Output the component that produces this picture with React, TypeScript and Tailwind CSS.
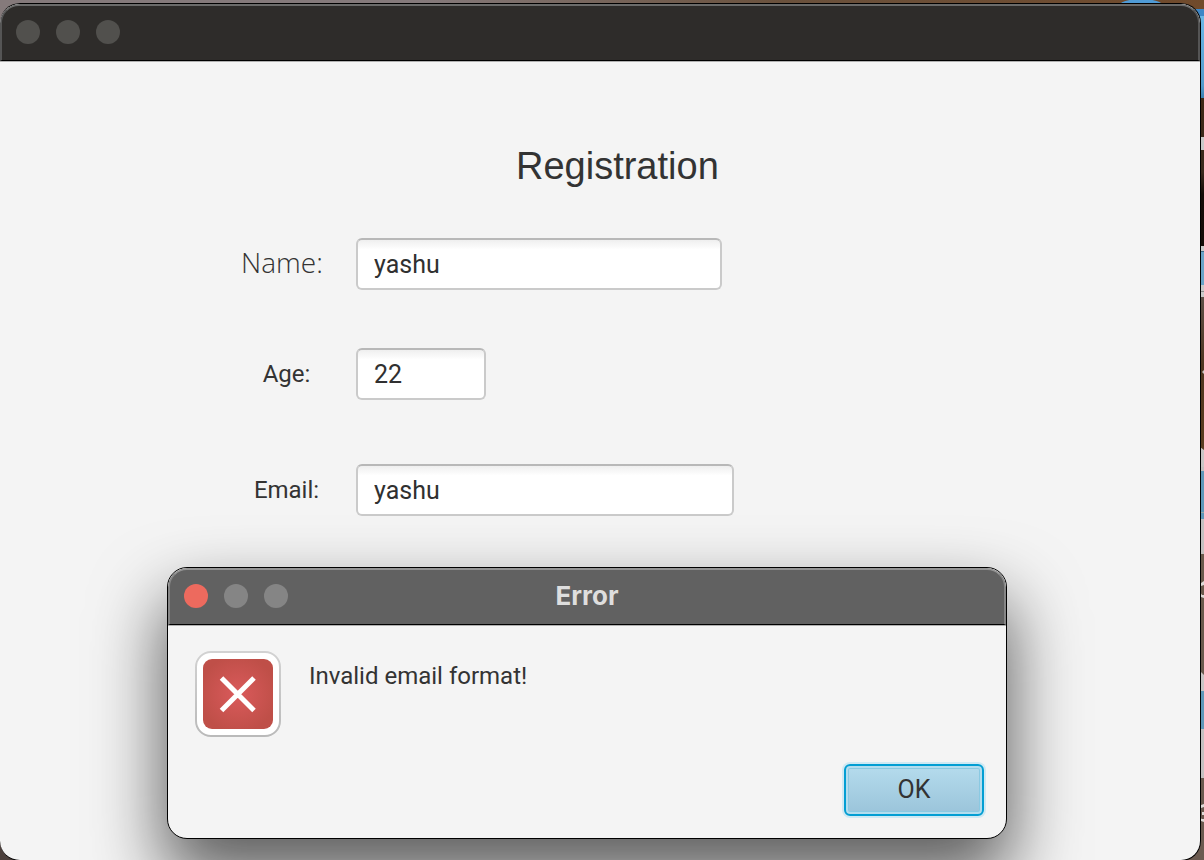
import { ReactNode } from "react";

function WindowDots({ first, rest }: { first: string; rest: string }) {
  return (
    <div className="flex gap-4">
      <button type="button" aria-label="Close" className={`size-6 rounded-full ${first}`} />
      <button type="button" aria-label="Minimize" className={`size-6 rounded-full ${rest}`} />
      <button type="button" aria-label="Zoom" className={`size-6 rounded-full ${rest}`} />
    </div>
  );
}

function Wallpaper() {
  return (
    <>
      <div className="absolute inset-x-0 top-0 h-10 bg-linear-to-r from-[#857a7b] from-35% via-[#6a513c] via-65% to-[#704a2b]" />
      <svg className="absolute top-0 right-0 h-[860px] w-[84px]" viewBox="0 0 84 860" aria-hidden="true">
        <defs>
          <linearGradient id="folder" x1="0" y1="0" x2="0" y2="1">
            <stop offset="0" stopColor="#6bb8e6" />
            <stop offset="0.85" stopColor="#539bcb" />
            <stop offset="1" stopColor="#3b7fb0" />
          </linearGradient>
          <linearGradient id="rock" x1="0" y1="0" x2="0" y2="1">
            <stop offset="0" stopColor="#3f2916" />
            <stop offset="0.5" stopColor="#3a2a1e" />
            <stop offset="0.65" stopColor="#140b07" />
            <stop offset="1" stopColor="#150c08" />
          </linearGradient>
          <linearGradient id="sand" x1="0" y1="0" x2="0" y2="1">
            <stop offset="0" stopColor="#5f5048" />
            <stop offset="0.12" stopColor="#4f3620" />
            <stop offset="0.25" stopColor="#5a3c1f" />
            <stop offset="0.45" stopColor="#6b5a4c" />
            <stop offset="1" stopColor="#6b5a50" />
          </linearGradient>
        </defs>
        <ellipse cx="21" cy="6" rx="22" ry="7" fill="#4f9bd6" />
        <rect x="72" y="9" width="12" height="7" fill="#3d86c6" />
        <rect x="72" y="16" width="12" height="82" fill="url(#folder)" />
        <rect x="80" y="98" width="4" height="148" fill="url(#rock)" />
        <rect x="80" y="137" width="4" height="13" fill="#c9c9c9" />
        <rect x="80" y="246" width="4" height="51" fill="#cacaca" />
        <rect x="80" y="251" width="4" height="34" fill="#69a4c8" />
        <rect x="80" y="251" width="4" height="1" fill="#3c6a86" />
        <rect x="80" y="291" width="4" height="1" fill="#8b8b8b" />
        <rect x="80" y="297" width="4" height="563" fill="url(#sand)" />
        <path d="M60 840h24v20H60z" fill="#6b5a50" />
        <path d="M84 370l-2 2 2 2zM80 447l4 3v18h-4z" fill="#c9c5c5" />
        <rect x="80" y="467" width="4" height="87" fill="#c4c0c0" />
        <rect x="80" y="471" width="4" height="48" fill="#5f98b9" />
        <rect x="80" y="512" width="4" height="1" fill="#99aaaa" />
        <path d="M81 583l3-2v4l-3 1zM80 592l2 3h2v3l-3-1zM81 805l3-1v3l-3 1zM82 812h2v3h-2zM80 818l2 1h2v3l-3-1z" fill="#dedad8" />
        <path d="M80 671l4 4v17h-4z" fill="#c9c5c5" />
        <rect x="80" y="691" width="4" height="38" fill="#5f98b9" />
        <rect x="80" y="729" width="4" height="49" fill="#c4c0c0" />
      </svg>
    </>
  );
}

const fieldClass =
  "h-[52px] rounded-[6px] border-2 border-[#cacaca] border-t-[#b8b8b8] bg-white bg-linear-to-b from-[#efefef] to-white to-20% px-4 text-[25px] leading-8 text-[#303030] outline-none";

function Row({ id, label, children, labelClass }: { id: string; label: string; children: ReactNode; labelClass: string }) {
  return (
    <div className="flex items-center gap-6">
      <label htmlFor={id} className={`w-[91px] leading-8 ${labelClass}`}>
        {label}
      </label>
      {children}
    </div>
  );
}

function ErrorDialog() {
  return (
    <section
      role="alertdialog"
      aria-labelledby="dialog-title"
      aria-describedby="dialog-message"
      className="absolute top-[567px] left-[167px] w-[840px] overflow-hidden rounded-[20px] border border-black bg-[#f4f4f4] shadow-[0_36px_70px_4px_rgba(0,0,0,0.62)]"
    >
      <header className="grid h-[57px] grid-cols-[1fr_auto_1fr] items-center rounded-t-[19px] border-x-2 border-t-2 border-b border-x-[#868686] border-t-[#949494] border-b-black bg-[#616161] px-[14px] pb-[2px]">
        <WindowDots first="bg-[#ed6a5e]" rest="bg-[#858585]" />
        <h2 id="dialog-title" className="font-['Inter',sans-serif] text-[26px] leading-8 font-bold text-[#dedede]">
          Error
        </h2>
      </header>
      <div className="flex items-start gap-7 border-t border-[#b0b0b0] px-[27px] pt-[25px]">
        <svg viewBox="0 0 86 86" className="size-[86px] shrink-0" aria-hidden="true">
          <defs>
            <linearGradient id="rim" x1="0" y1="0" x2="0" y2="1">
              <stop offset="0" stopColor="#d2d2d2" />
              <stop offset="1" stopColor="#bababa" />
            </linearGradient>
            <radialGradient id="red" cx="0.5" cy="0.5" r="0.55">
              <stop offset="0" stopColor="#da5a5b" />
              <stop offset="1" stopColor="#bf4f48" />
            </radialGradient>
          </defs>
          <rect x="1" y="1" width="84" height="84" rx="15" fill="white" stroke="url(#rim)" strokeWidth="2" />
          <rect x="8" y="8" width="70" height="70" rx="9" fill="url(#red)" />
          <path d="M26.500 27L59 59.500M59 27L26.500 59.500" stroke="white" strokeWidth="5" />
        </svg>
        <p id="dialog-message" className="pt-[9px] text-[24px] leading-8">
          Invalid email format!
        </p>
      </div>
      <footer className="flex justify-end px-[22px] pt-[27px] pb-[22px]">
        <button
          type="button"
          className="h-[52px] w-[140px] rounded-[6px] border-2 border-[#039ed3] bg-linear-to-b from-[#b5dced] to-[#9ac4da] text-[25px] leading-8 text-[#333] shadow-[0_0_0_2px_#cfe9f3,inset_0_0_0_2px_#b3ddee,inset_0_0_0_3px_#8ac9e2]"
        >
          OK
        </button>
      </footer>
    </section>
  );
}

export default function App() {
  return (
    <main className="relative flex min-h-screen flex-col overflow-hidden bg-[#4c403c] pt-[3px] pr-[3px] font-['Roboto',sans-serif] text-[#333]">
      <Wallpaper />
      <section className="relative -mb-px flex flex-1 flex-col overflow-hidden rounded-[20px] border-t border-r border-b border-black bg-[#f4f4f4]">
        <header className="flex h-[57px] items-center rounded-t-[19px] border-x-2 border-t-2 border-b border-x-[#555] border-t-[#6b6b6a] border-b-black bg-[#2e2c2a] px-[14px] pb-[2px]">
          <WindowDots first="bg-[#51504d]" rest="bg-[#51504d]" />
        </header>
        <form className="border-t border-[#b0b0b0] pl-[241px]" onSubmit={(e) => e.preventDefault()}>
          <h1 className="mt-20 ml-[275px] font-['Liberation_Sans',sans-serif] text-[38px] leading-[48px]">Registration</h1>
          <div className="mt-12 flex flex-col">
            <Row id="name" label="Name:" labelClass="pb-1 font-['Open_Sans',sans-serif] font-light text-[28px]">
              <input id="name" defaultValue="yashu" className={`w-[366px] ${fieldClass}`} />
            </Row>
            <div className="mt-[58px]">
              <Row id="age" label="Age:" labelClass="text-center text-[24px]">
                <input id="age" defaultValue="22" className={`w-[130px] ${fieldClass}`} />
              </Row>
            </div>
            <div className="mt-16">
              <Row id="email" label="Email:" labelClass="text-center text-[24px]">
                <input id="email" type="text" defaultValue="yashu" className={`w-[378px] ${fieldClass}`} />
              </Row>
            </div>
          </div>
        </form>
      </section>
      <ErrorDialog />
    </main>
  );
}
